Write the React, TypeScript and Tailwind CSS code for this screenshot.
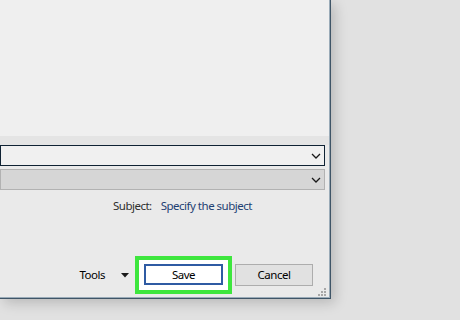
const Chevron = () => (
  <svg width="10" height="6" viewBox="0 0 10 6" fill="none">
    <path d="M1 1 L5 5 L9 1" stroke="#1a1a1a" strokeWidth="1.3" />
  </svg>
);

const Grip = () => (
  <svg width="8" height="8" viewBox="0 0 8 8" className="absolute right-[3px] bottom-[1px]">
    <rect x="6" y="0" width="2" height="2" fill="#a7a7a7" />
    <rect x="3" y="3" width="2" height="2" fill="#a7a7a7" />
    <rect x="6" y="3" width="2" height="2" fill="#a7a7a7" />
    <rect x="0" y="6" width="2" height="2" fill="#a7a7a7" />
    <rect x="3" y="6" width="2" height="2" fill="#a7a7a7" />
    <rect x="6" y="6" width="2" height="2" fill="#a7a7a7" />
  </svg>
);

const App = () => {
  return (
    <div
      className="w-[460px] h-[320px] overflow-hidden bg-[#e1e1e1] flex items-start text-[11.5px] tracking-[-0.5px]"
      style={{ fontFamily: '"Noto Sans", "Open Sans", sans-serif' }}
    >
      <div className="w-[331px] h-[299px] border-r border-b border-[#3f5567] shadow-[4px_4px_12px_rgba(0,0,0,0.18)]">
        <div className="relative h-full flex flex-col border-r border-b border-[#9aabb8] bg-[#eaeaea]">
          {/* empty upper pane */}
          <div className="h-[136px] bg-[#efefef]" />
          <div className="h-[9px] bg-[#e4e4e4]" />

          {/* dropdowns */}
          <div className="mr-[4px] h-[21px] border border-[#0f2233] bg-[#f0f0f0] flex items-center justify-end pr-[3px]">
            <Chevron />
          </div>
          <div className="h-[3px]" />
          <div className="mr-[4px] h-[21px] border border-[#b2b2b2] bg-[#d6d6d6] flex items-center justify-end pr-[3px]">
            <Chevron />
          </div>

          {/* subject */}
          <div className="flex items-center gap-[9px] pl-[113px] mt-[7px] leading-[17px]">
            <span className="text-[#2e2e2e]">Subject:</span>
            <span className="text-[#1e3f73]">Specify the subject</span>
          </div>

          <div className="flex-1" />

          {/* buttons */}
          <div className="flex items-center justify-end pr-[16px] mb-[3px]">
            <span className="text-black">Tools</span>
            <svg width="8" height="5" viewBox="0 0 8 5" className="ml-[16px] mr-[6px]">
              <path d="M0 0 H8 L4 4.5 Z" fill="#1a1a1a" />
            </svg>
            <div className="border-4 border-[#3ee63e] bg-white pl-[5px] pr-[5px] pt-[4px] pb-[5px]">
              <button className="w-[79px] h-[21px] border-2 border-[#2f5ba3] bg-white text-black leading-none">
                Save
              </button>
            </div>
            <button className="ml-[3px] w-[78px] h-[22px] border border-[#adadad] bg-[#e1e1e1] text-black leading-none">
              Cancel
            </button>
          </div>
          <Grip />
        </div>
      </div>
    </div>
  );
};

export default App;
